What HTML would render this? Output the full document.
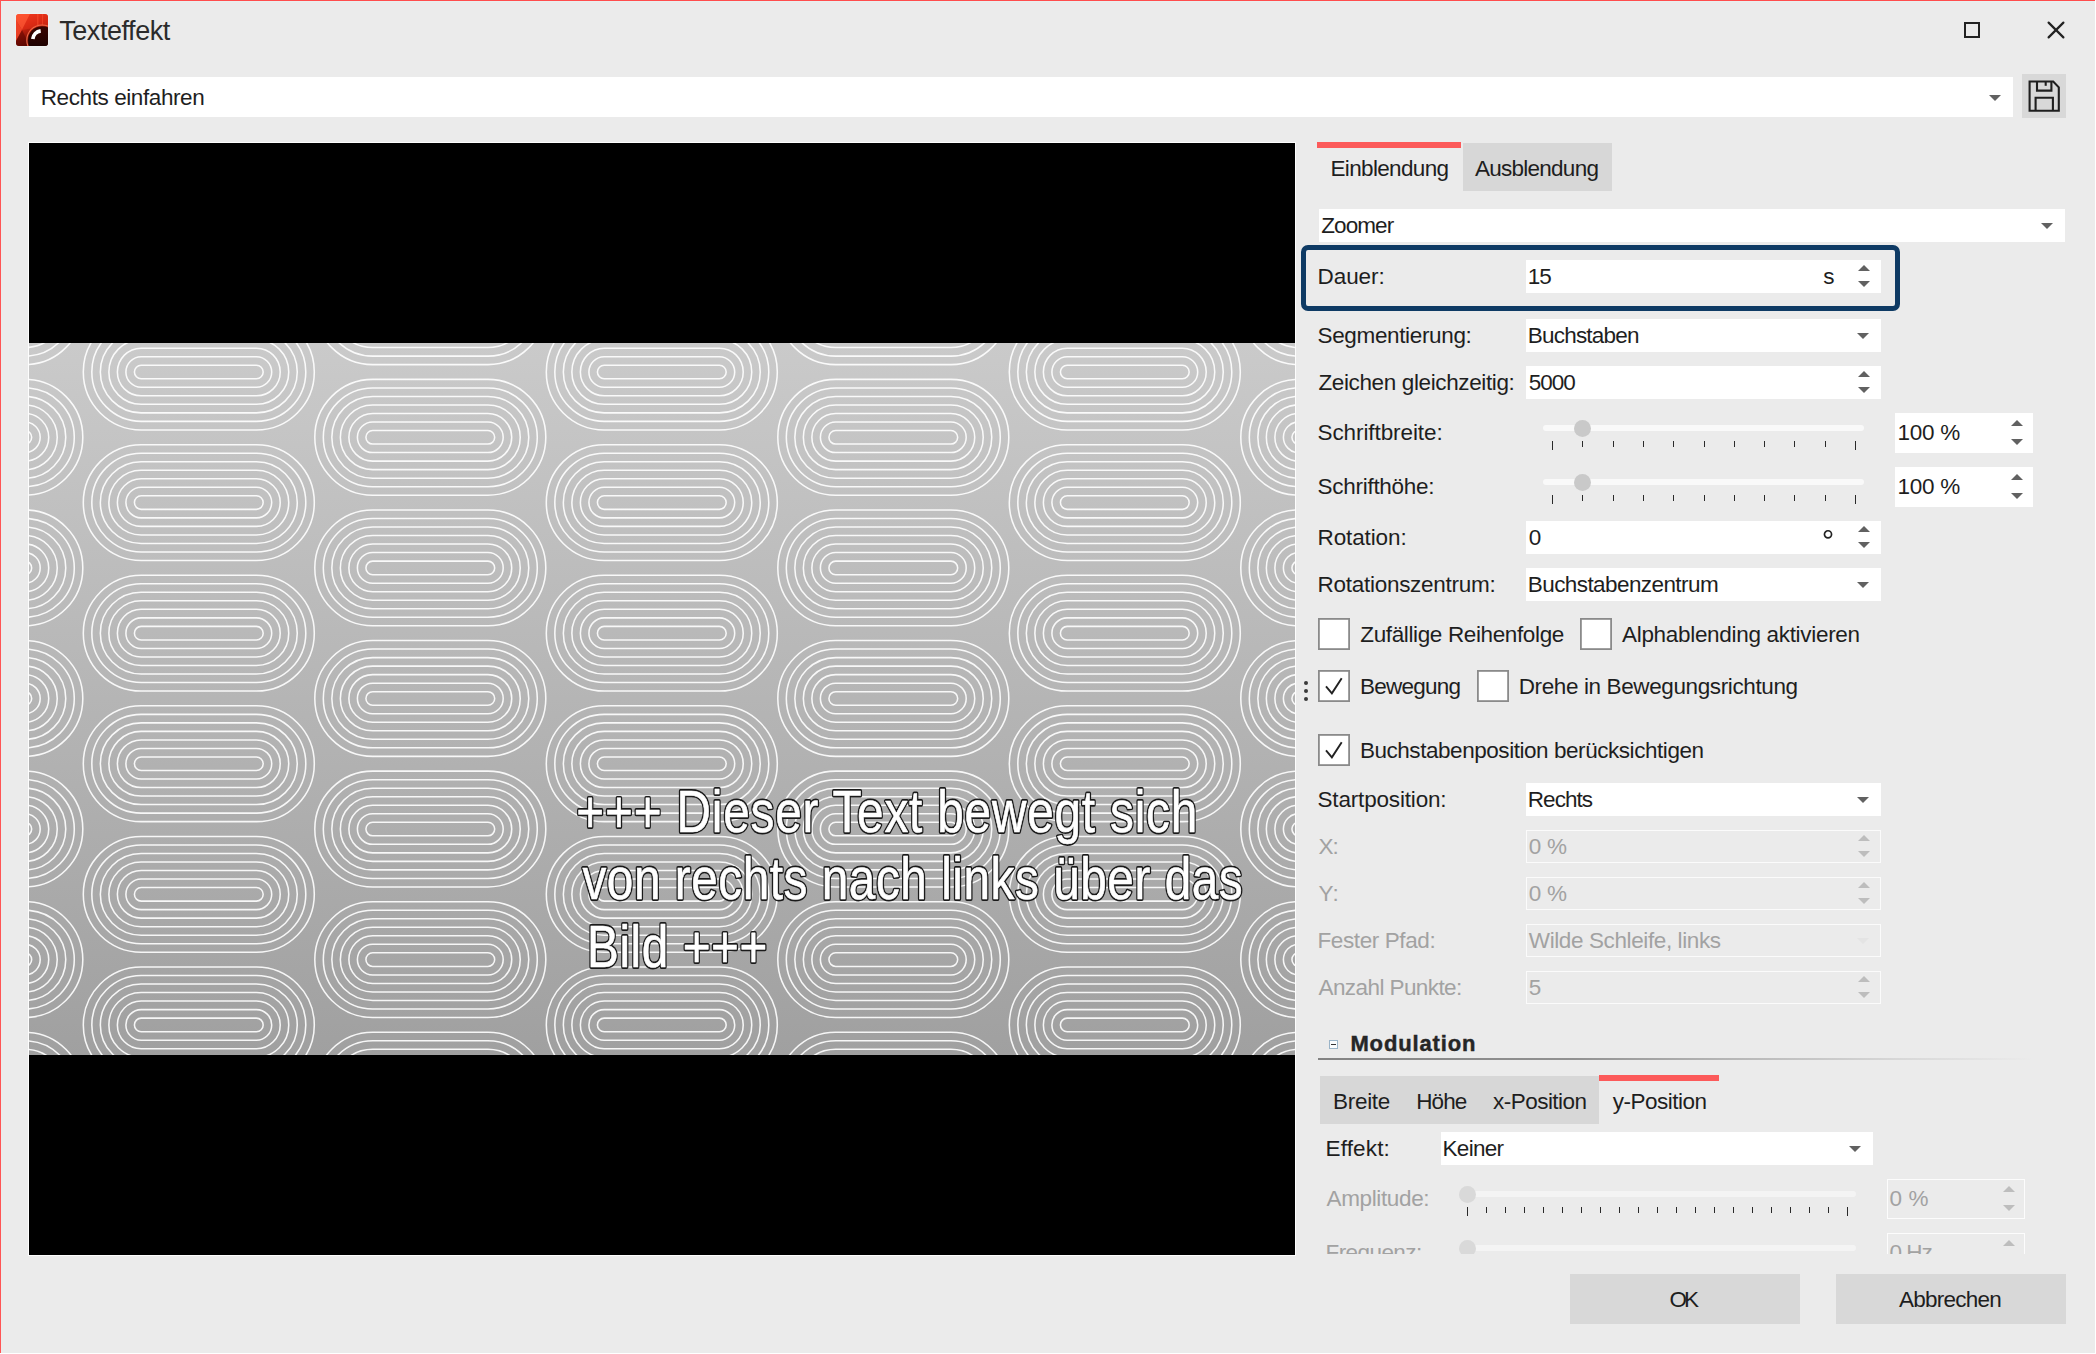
<!DOCTYPE html>
<html lang="de"><head><meta charset="utf-8"><title>Texteffekt</title>
<style>
html,body{margin:0;padding:0}
body{width:2096px;height:1354px;overflow:hidden;background:#ebebeb;position:relative;font-family:"Liberation Sans",sans-serif}
.a,#m>div{position:absolute}
.t{position:absolute;white-space:pre;line-height:26px;font-family:"Liberation Sans",sans-serif}
#cl{position:absolute;left:0;top:1170px;width:2096px;height:84px;overflow:hidden}
#cl>.in{position:absolute;left:0;top:-1170px;width:2096px;height:1354px}
</style></head><body>
<div class="a" style="left:0;top:0;width:2096px;height:1px;background:#ff4d4d"></div>
<div class="a" style="left:1px;top:1px;width:2094px;height:1px;background:#e8f0f0"></div>
<div class="a" style="left:0;top:0;width:1px;height:1353px;background:#ff5555"></div>
<div class="a" style="left:2095px;top:0;width:1px;height:1354px;background:#fff"></div>
<div class="a" style="left:0;top:1353px;width:2096px;height:1px;background:#fff"></div>
<svg class="a" style="left:15px;top:13px" width="34" height="34" viewBox="-1 -1 34 34">
<defs><linearGradient id="ig" x1="0" y1="0" x2="0.35" y2="1"><stop offset="0" stop-color="#ff4326"/><stop offset=".45" stop-color="#cc2410"/><stop offset="1" stop-color="#5a0600"/></linearGradient>
<linearGradient id="ig2" x1="0" y1="0" x2="0" y2="1"><stop offset="0" stop-color="#3a0500"/><stop offset="1" stop-color="#120000"/></linearGradient>
<clipPath id="ic"><rect x="0" y="0" width="32" height="32" rx="3"/></clipPath></defs>
<rect x="-.5" y="-.5" width="33" height="33" rx="3.3" fill="#eff5f5"/>
<g clip-path="url(#ic)"><rect width="32" height="32" fill="url(#ig)"/>
<path d="M0 0H14L6 16L0 6Z" fill="#ff5a36" fill-opacity=".75"/>
<path d="M0 6L6 16L0 27Z" fill="#f04428" fill-opacity=".9"/>
<path d="M6 16L0 27V32H14Z" fill="#5a0600" fill-opacity=".55"/>
<path d="M14 0H32V12L18 14L6 16Z" fill="#e83018" fill-opacity=".5"/>
<path d="M21 0H22.5V11H21ZM26 0H27V11H26Z" fill="#ff5533" fill-opacity=".45"/>
<circle cx="26" cy="26.2" r="15.2" fill="none" stroke="#ee6a48" stroke-width="1.1"/>
<circle cx="26" cy="26.2" r="13.9" fill="url(#ig2)"/>
<path d="M16.8 25A9.3 9.3 0 0 1 24.7 16.8" fill="none" stroke="#fff" stroke-width="3.7"/>
</g></svg>
<svg class="a" style="left:1963px;top:21px" width="18" height="18" viewBox="0 0 18 18"><rect x="2" y="2" width="14" height="14" fill="none" stroke="#222" stroke-width="2"/></svg>
<svg class="a" style="left:2046px;top:20px" width="20" height="20" viewBox="0 0 20 20"><path d="M2.6 2.6L17.4 17.4M17.4 2.6L2.6 17.4" fill="none" stroke="#222" stroke-width="2.2" stroke-linecap="round"/></svg>
<div class="a" style="left:28px;top:142px;width:1268px;height:1114px;background:#fdfdfd"></div>
<div class="a" style="left:29px;top:143px;width:1266px;height:1112px;background:#000"></div>
<svg class="a" style="left:29px;top:343px" width="1266" height="712" viewBox="29 343 1266 712"><defs><linearGradient id="gg" x1="0" y1="0" x2="0" y2="1"><stop offset="0" stop-color="#cacaca"/><stop offset="1" stop-color="#a0a0a0"/></linearGradient><g id="pl" fill="none" stroke="#fff" stroke-opacity=".9" stroke-width="1.55"><rect x="-115.50" y="-57.90" width="231.00" height="115.80" rx="57.90"/><rect x="-106.98" y="-49.38" width="213.96" height="98.76" rx="49.38"/><rect x="-98.46" y="-40.86" width="196.92" height="81.72" rx="40.86"/><rect x="-89.94" y="-32.34" width="179.88" height="64.68" rx="32.34"/><rect x="-81.42" y="-23.82" width="162.84" height="47.64" rx="23.82"/><rect x="-72.90" y="-15.30" width="145.80" height="30.60" rx="15.30"/><rect x="-64.38" y="-6.78" width="128.76" height="13.56" rx="6.78"/></g></defs><rect x="29" y="343" width="1266" height="712" fill="url(#gg)"/><use href="#pl" x="-32.70" y="306.72"/><use href="#pl" x="-32.70" y="437.30"/><use href="#pl" x="-32.70" y="567.88"/><use href="#pl" x="-32.70" y="698.46"/><use href="#pl" x="-32.70" y="829.04"/><use href="#pl" x="-32.70" y="959.62"/><use href="#pl" x="-32.70" y="1090.20"/><use href="#pl" x="198.80" y="372.00"/><use href="#pl" x="198.80" y="502.58"/><use href="#pl" x="198.80" y="633.16"/><use href="#pl" x="198.80" y="763.74"/><use href="#pl" x="198.80" y="894.32"/><use href="#pl" x="198.80" y="1024.90"/><use href="#pl" x="430.30" y="306.72"/><use href="#pl" x="430.30" y="437.30"/><use href="#pl" x="430.30" y="567.88"/><use href="#pl" x="430.30" y="698.46"/><use href="#pl" x="430.30" y="829.04"/><use href="#pl" x="430.30" y="959.62"/><use href="#pl" x="430.30" y="1090.20"/><use href="#pl" x="661.80" y="372.00"/><use href="#pl" x="661.80" y="502.58"/><use href="#pl" x="661.80" y="633.16"/><use href="#pl" x="661.80" y="763.74"/><use href="#pl" x="661.80" y="894.32"/><use href="#pl" x="661.80" y="1024.90"/><use href="#pl" x="893.30" y="306.72"/><use href="#pl" x="893.30" y="437.30"/><use href="#pl" x="893.30" y="567.88"/><use href="#pl" x="893.30" y="698.46"/><use href="#pl" x="893.30" y="829.04"/><use href="#pl" x="893.30" y="959.62"/><use href="#pl" x="893.30" y="1090.20"/><use href="#pl" x="1124.80" y="372.00"/><use href="#pl" x="1124.80" y="502.58"/><use href="#pl" x="1124.80" y="633.16"/><use href="#pl" x="1124.80" y="763.74"/><use href="#pl" x="1124.80" y="894.32"/><use href="#pl" x="1124.80" y="1024.90"/><use href="#pl" x="1356.30" y="306.72"/><use href="#pl" x="1356.30" y="437.30"/><use href="#pl" x="1356.30" y="567.88"/><use href="#pl" x="1356.30" y="698.46"/><use href="#pl" x="1356.30" y="829.04"/><use href="#pl" x="1356.30" y="959.62"/><use href="#pl" x="1356.30" y="1090.20"/></svg>
<svg class="a" style="left:29px;top:343px" width="1266" height="712" viewBox="29 343 1266 712" font-family="Liberation Sans, sans-serif" font-size="58.5"><g transform="translate(576.37 831.5) scale(0.8150 1)" letter-spacing="1.017"><text fill="#fff" stroke="#1a1a1a" stroke-width="3.8" stroke-linejoin="round">+++ Dieser Text bewegt sich</text><text fill="#fff" stroke="#fff" stroke-width="0.6" stroke-linejoin="round">+++ Dieser Text bewegt sich</text></g><g transform="translate(582.40 899.1) scale(0.8150 1)" letter-spacing="0.691"><text fill="#fff" stroke="#1a1a1a" stroke-width="3.8" stroke-linejoin="round">von rechts nach links über das</text><text fill="#fff" stroke="#fff" stroke-width="0.6" stroke-linejoin="round">von rechts nach links über das</text></g><g transform="translate(587.04 967.4) scale(0.8150 1)" letter-spacing="0.709"><text fill="#fff" stroke="#1a1a1a" stroke-width="3.8" stroke-linejoin="round">Bild +++</text><text fill="#fff" stroke="#fff" stroke-width="0.6" stroke-linejoin="round">Bild +++</text></g></svg>
<div id="m">
<div class="" style="left:29px;top:77px;width:1984px;height:40px;background:#fff;"></div>
<svg class="a" style="left:1989px;top:95px" width="12" height="6" viewBox="0 0 12 6"><path d="M0 0H12L6.0 6Z" fill="#616161"/></svg>
<div class="a" style="left:2022px;top:74px;width:44px;height:44px;background:#d8d8d8"><svg width="44" height="44" viewBox="0 0 44 44" fill="none" stroke="#1f1f1f" stroke-width="2.1" stroke-linejoin="miter"><path d="M7.6 7.5H31.2L36.8 13.3V36.8H7.6Z"/><path d="M15 7.5V16.6H29.4V7.5"/><path d="M23.7 7.5V11.8"/><path d="M13.6 36.8V23.7H30.9V36.8"/></svg></div>
<div class="" style="left:1317px;top:142px;width:144px;height:6px;background:#fc5a5a;"></div>
<div class="" style="left:1463px;top:143px;width:149px;height:48px;background:#d7d7d7;"></div>
<div class="" style="left:1319px;top:209px;width:746px;height:33px;background:#fff;"></div>
<svg class="a" style="left:2041px;top:223px" width="12" height="6" viewBox="0 0 12 6"><path d="M0 0H12L6.0 6Z" fill="#616161"/></svg>
<div class="a" style="left:1301px;top:245px;width:599px;height:66px;box-sizing:border-box;border:5px solid #0e3a64;border-radius:7px"></div>
<div class="" style="left:1526px;top:260px;width:355px;height:33px;background:#fff;"></div>
<svg class="a" style="left:1858.2px;top:265px" width="12" height="6" viewBox="0 0 12 6"><path d="M0 6H12L6.0 0Z" fill="#616161"/></svg>
<svg class="a" style="left:1858.2px;top:281px" width="12" height="6" viewBox="0 0 12 6"><path d="M0 0H12L6.0 6Z" fill="#616161"/></svg>
<div class="" style="left:1526px;top:319px;width:355px;height:33px;background:#fff;"></div>
<svg class="a" style="left:1857px;top:333px" width="12" height="6" viewBox="0 0 12 6"><path d="M0 0H12L6.0 6Z" fill="#616161"/></svg>
<div class="" style="left:1526px;top:366px;width:355px;height:33px;background:#fff;"></div>
<svg class="a" style="left:1858.2px;top:371px" width="12" height="6" viewBox="0 0 12 6"><path d="M0 6H12L6.0 0Z" fill="#616161"/></svg>
<svg class="a" style="left:1858.2px;top:387px" width="12" height="6" viewBox="0 0 12 6"><path d="M0 0H12L6.0 6Z" fill="#616161"/></svg>
<div class="" style="left:1543px;top:425px;width:321px;height:6px;background:#f9f9f9;border-radius:3px"></div>
<div class="" style="left:1573.5px;top:419.5px;width:17px;height:17px;background:#c9c9c9;border-radius:50%"></div>
<div class="" style="left:1552px;top:441px;width:1px;height:9px;background:#2a2a2a;"></div>
<div class="" style="left:1582px;top:441px;width:1px;height:6px;background:#2a2a2a;"></div>
<div class="" style="left:1613px;top:441px;width:1px;height:6px;background:#2a2a2a;"></div>
<div class="" style="left:1643px;top:441px;width:1px;height:6px;background:#2a2a2a;"></div>
<div class="" style="left:1673px;top:441px;width:1px;height:6px;background:#2a2a2a;"></div>
<div class="" style="left:1704px;top:441px;width:1px;height:6px;background:#2a2a2a;"></div>
<div class="" style="left:1734px;top:441px;width:1px;height:6px;background:#2a2a2a;"></div>
<div class="" style="left:1764px;top:441px;width:1px;height:6px;background:#2a2a2a;"></div>
<div class="" style="left:1794px;top:441px;width:1px;height:6px;background:#2a2a2a;"></div>
<div class="" style="left:1825px;top:441px;width:1px;height:6px;background:#2a2a2a;"></div>
<div class="" style="left:1855px;top:441px;width:1px;height:9px;background:#2a2a2a;"></div>
<div class="" style="left:1895px;top:413px;width:138px;height:40px;background:#fff;"></div>
<svg class="a" style="left:2010.5px;top:420px" width="12" height="6" viewBox="0 0 12 6"><path d="M0 6H12L6.0 0Z" fill="#616161"/></svg>
<svg class="a" style="left:2010.5px;top:439px" width="12" height="6" viewBox="0 0 12 6"><path d="M0 0H12L6.0 6Z" fill="#616161"/></svg>
<div class="" style="left:1543px;top:479px;width:321px;height:6px;background:#f9f9f9;border-radius:3px"></div>
<div class="" style="left:1573.5px;top:473.5px;width:17px;height:17px;background:#c9c9c9;border-radius:50%"></div>
<div class="" style="left:1552px;top:495px;width:1px;height:9px;background:#2a2a2a;"></div>
<div class="" style="left:1582px;top:495px;width:1px;height:6px;background:#2a2a2a;"></div>
<div class="" style="left:1613px;top:495px;width:1px;height:6px;background:#2a2a2a;"></div>
<div class="" style="left:1643px;top:495px;width:1px;height:6px;background:#2a2a2a;"></div>
<div class="" style="left:1673px;top:495px;width:1px;height:6px;background:#2a2a2a;"></div>
<div class="" style="left:1704px;top:495px;width:1px;height:6px;background:#2a2a2a;"></div>
<div class="" style="left:1734px;top:495px;width:1px;height:6px;background:#2a2a2a;"></div>
<div class="" style="left:1764px;top:495px;width:1px;height:6px;background:#2a2a2a;"></div>
<div class="" style="left:1794px;top:495px;width:1px;height:6px;background:#2a2a2a;"></div>
<div class="" style="left:1825px;top:495px;width:1px;height:6px;background:#2a2a2a;"></div>
<div class="" style="left:1855px;top:495px;width:1px;height:9px;background:#2a2a2a;"></div>
<div class="" style="left:1895px;top:467px;width:138px;height:40px;background:#fff;"></div>
<svg class="a" style="left:2010.5px;top:474px" width="12" height="6" viewBox="0 0 12 6"><path d="M0 6H12L6.0 0Z" fill="#616161"/></svg>
<svg class="a" style="left:2010.5px;top:493px" width="12" height="6" viewBox="0 0 12 6"><path d="M0 0H12L6.0 6Z" fill="#616161"/></svg>
<div class="" style="left:1526px;top:521px;width:355px;height:33px;background:#fff;"></div>
<svg class="a" style="left:1858.2px;top:526px" width="12" height="6" viewBox="0 0 12 6"><path d="M0 6H12L6.0 0Z" fill="#616161"/></svg>
<svg class="a" style="left:1858.2px;top:542px" width="12" height="6" viewBox="0 0 12 6"><path d="M0 0H12L6.0 6Z" fill="#616161"/></svg>
<svg class="a" style="left:1822px;top:528px" width="12" height="12" viewBox="0 0 12 12"><circle cx="6" cy="6.3" r="3.55" fill="none" stroke="#222" stroke-width="1.7"/></svg>
<div class="" style="left:1526px;top:568px;width:355px;height:33px;background:#fff;"></div>
<svg class="a" style="left:1857px;top:582px" width="12" height="6" viewBox="0 0 12 6"><path d="M0 0H12L6.0 6Z" fill="#616161"/></svg>
<svg class="a" style="left:1318px;top:618px" width="32" height="32" viewBox="0 0 32 32"><rect x=".9" y=".9" width="30.2" height="30.2" fill="#fff" stroke="#8a8a8a" stroke-width="1.8"/></svg>
<svg class="a" style="left:1580px;top:618px" width="32" height="32" viewBox="0 0 32 32"><rect x=".9" y=".9" width="30.2" height="30.2" fill="#fff" stroke="#8a8a8a" stroke-width="1.8"/></svg>
<svg class="a" style="left:1318px;top:670px" width="32" height="32" viewBox="0 0 32 32"><rect x=".9" y=".9" width="30.2" height="30.2" fill="#fff" stroke="#8a8a8a" stroke-width="1.8"/><path d="M8 16.3L13.9 23.3L23.7 8.2" fill="none" stroke="#222" stroke-width="1.9"/></svg>
<svg class="a" style="left:1477px;top:670px" width="32" height="32" viewBox="0 0 32 32"><rect x=".9" y=".9" width="30.2" height="30.2" fill="#fff" stroke="#8a8a8a" stroke-width="1.8"/></svg>
<div class="" style="left:1304px;top:681px;width:4px;height:4px;background:#3a3a3a;border-radius:50%"></div>
<div class="" style="left:1304px;top:689px;width:4px;height:4px;background:#3a3a3a;border-radius:50%"></div>
<div class="" style="left:1304px;top:697px;width:4px;height:4px;background:#3a3a3a;border-radius:50%"></div>
<svg class="a" style="left:1318px;top:734px" width="32" height="32" viewBox="0 0 32 32"><rect x=".9" y=".9" width="30.2" height="30.2" fill="#fff" stroke="#8a8a8a" stroke-width="1.8"/><path d="M8 16.3L13.9 23.3L23.7 8.2" fill="none" stroke="#222" stroke-width="1.9"/></svg>
<div class="" style="left:1526px;top:783px;width:355px;height:33px;background:#fff;"></div>
<svg class="a" style="left:1857px;top:797px" width="12" height="6" viewBox="0 0 12 6"><path d="M0 0H12L6.0 6Z" fill="#616161"/></svg>
<div class="" style="left:1526px;top:830px;width:355px;height:33px;background:#ebebeb;box-sizing:border-box;border:1px solid #fbfbfb"></div>
<svg class="a" style="left:1858.2px;top:835px" width="12" height="6" viewBox="0 0 12 6"><path d="M0 6H12L6.0 0Z" fill="#bdbdbd"/></svg>
<svg class="a" style="left:1858.2px;top:851px" width="12" height="6" viewBox="0 0 12 6"><path d="M0 0H12L6.0 6Z" fill="#bdbdbd"/></svg>
<div class="" style="left:1526px;top:877px;width:355px;height:33px;background:#ebebeb;box-sizing:border-box;border:1px solid #fbfbfb"></div>
<svg class="a" style="left:1858.2px;top:882px" width="12" height="6" viewBox="0 0 12 6"><path d="M0 6H12L6.0 0Z" fill="#bdbdbd"/></svg>
<svg class="a" style="left:1858.2px;top:898px" width="12" height="6" viewBox="0 0 12 6"><path d="M0 0H12L6.0 6Z" fill="#bdbdbd"/></svg>
<div class="" style="left:1526px;top:924px;width:355px;height:33px;background:#ebebeb;box-sizing:border-box;border:1px solid #fbfbfb"></div>
<svg class="a" style="left:1857px;top:938px" width="12" height="6" viewBox="0 0 12 6"><path d="M0 0H12L6.0 6Z" fill="#e4e4e4"/></svg>
<div class="" style="left:1526px;top:971px;width:355px;height:33px;background:#ebebeb;box-sizing:border-box;border:1px solid #fbfbfb"></div>
<svg class="a" style="left:1858.2px;top:976px" width="12" height="6" viewBox="0 0 12 6"><path d="M0 6H12L6.0 0Z" fill="#bdbdbd"/></svg>
<svg class="a" style="left:1858.2px;top:992px" width="12" height="6" viewBox="0 0 12 6"><path d="M0 0H12L6.0 6Z" fill="#bdbdbd"/></svg>
<div class="a" style="left:1329px;top:1040px;width:9px;height:9px;box-sizing:border-box;border:1px solid #9ab4c8;background:#fafcfd"><div class="a" style="left:1px;top:3px;width:5px;height:1px;background:#333"></div></div>
<div class="" style="left:1318px;top:1058px;width:730px;height:2px;background:linear-gradient(90deg,rgba(105,105,105,.8) 0,rgba(110,110,110,.72) 35%,rgba(120,120,120,.48) 55%,rgba(140,140,140,.2) 80%,rgba(200,200,200,0) 98%);"></div>
<div class="" style="left:1320px;top:1076px;width:279px;height:48px;background:#d7d7d7;"></div>
<div class="" style="left:1599px;top:1075px;width:120px;height:6px;background:#fc5a5a;"></div>
<div class="" style="left:1441px;top:1132px;width:432px;height:33px;background:#fff;"></div>
<svg class="a" style="left:1849px;top:1146px" width="12" height="6" viewBox="0 0 12 6"><path d="M0 0H12L6.0 6Z" fill="#616161"/></svg>
<div class="" style="left:1570px;top:1274px;width:230px;height:50px;background:#d8d8d8;"></div>
<div class="" style="left:1836px;top:1274px;width:230px;height:50px;background:#d8d8d8;"></div>
</div>
<span class="t" style="left:59.2px;top:18px;font-size:27px;color:#2b2b2b;letter-spacing:-0.44px;">Texteffekt</span>
<span class="t" style="left:40.75px;top:85px;font-size:22.5px;color:#1e1e1e;letter-spacing:-0.41px;">Rechts einfahren</span>
<span class="t" style="left:1330.5px;top:156px;font-size:22.5px;color:#1e1e1e;letter-spacing:-0.66px;">Einblendung</span>
<span class="t" style="left:1474.9px;top:156px;font-size:22.5px;color:#1e1e1e;letter-spacing:-0.73px;">Ausblendung</span>
<span class="t" style="left:1321.3px;top:213px;font-size:22.5px;color:#1e1e1e;letter-spacing:-0.93px;">Zoomer</span>
<span class="t" style="left:1317.5px;top:264px;font-size:22.5px;color:#1e1e1e;letter-spacing:-0.06px;">Dauer:</span>
<span class="t" style="left:1527.8px;top:264px;font-size:22.5px;color:#1e1e1e;letter-spacing:-1.11px;">15</span>
<span class="t" style="left:1823.3px;top:264px;font-size:22.5px;color:#1e1e1e;letter-spacing:0px;">s</span>
<span class="t" style="left:1317.5px;top:323px;font-size:22.5px;color:#1e1e1e;letter-spacing:-0.35px;">Segmentierung:</span>
<span class="t" style="left:1527.8px;top:323px;font-size:22.5px;color:#1e1e1e;letter-spacing:-0.8px;">Buchstaben</span>
<span class="t" style="left:1318.5px;top:370px;font-size:22.5px;color:#1e1e1e;letter-spacing:-0.38px;">Zeichen gleichzeitig:</span>
<span class="t" style="left:1528.8px;top:370px;font-size:22.5px;color:#1e1e1e;letter-spacing:-1.05px;">5000</span>
<span class="t" style="left:1317.5px;top:420px;font-size:22.5px;color:#1e1e1e;letter-spacing:-0.09px;">Schriftbreite:</span>
<span class="t" style="left:1897.5px;top:420px;font-size:22.5px;color:#1e1e1e;letter-spacing:-0.25px;">100 %</span>
<span class="t" style="left:1317.5px;top:474px;font-size:22.5px;color:#1e1e1e;letter-spacing:-0.27px;">Schrifthöhe:</span>
<span class="t" style="left:1897.5px;top:474px;font-size:22.5px;color:#1e1e1e;letter-spacing:-0.25px;">100 %</span>
<span class="t" style="left:1317.5px;top:525px;font-size:22.5px;color:#1e1e1e;letter-spacing:-0.11px;">Rotation:</span>
<span class="t" style="left:1528.8px;top:525px;font-size:22.5px;color:#1e1e1e;letter-spacing:0px;">0</span>
<span class="t" style="left:1317.5px;top:572px;font-size:22.5px;color:#1e1e1e;letter-spacing:-0.27px;">Rotationszentrum:</span>
<span class="t" style="left:1527.8px;top:572px;font-size:22.5px;color:#1e1e1e;letter-spacing:-0.58px;">Buchstabenzentrum</span>
<span class="t" style="left:1360.3px;top:622px;font-size:22.5px;color:#1e1e1e;letter-spacing:-0.37px;">Zufällige Reihenfolge</span>
<span class="t" style="left:1622px;top:622px;font-size:22.5px;color:#1e1e1e;letter-spacing:-0.31px;">Alphablending aktivieren</span>
<span class="t" style="left:1359.9px;top:674px;font-size:22.5px;color:#1e1e1e;letter-spacing:-0.75px;">Bewegung</span>
<span class="t" style="left:1518.7px;top:674px;font-size:22.5px;color:#1e1e1e;letter-spacing:-0.38px;">Drehe in Bewegungsrichtung</span>
<span class="t" style="left:1359.9px;top:738px;font-size:22.5px;color:#1e1e1e;letter-spacing:-0.45px;">Buchstabenposition berücksichtigen</span>
<span class="t" style="left:1317.5px;top:787px;font-size:22.5px;color:#1e1e1e;letter-spacing:-0.17px;">Startposition:</span>
<span class="t" style="left:1527.8px;top:787px;font-size:22.5px;color:#1e1e1e;letter-spacing:-0.96px;">Rechts</span>
<span class="t" style="left:1318.5px;top:834px;font-size:22.5px;color:#a2a2a2;letter-spacing:-1.11px;">X:</span>
<span class="t" style="left:1528.8px;top:834px;font-size:22.5px;color:#a2a2a2;letter-spacing:-0.28px;">0 %</span>
<span class="t" style="left:1318.5px;top:881px;font-size:22.5px;color:#a2a2a2;letter-spacing:0.13px;">Y:</span>
<span class="t" style="left:1528.8px;top:881px;font-size:22.5px;color:#a2a2a2;letter-spacing:-0.28px;">0 %</span>
<span class="t" style="left:1317.5px;top:928px;font-size:22.5px;color:#a2a2a2;letter-spacing:-0.4px;">Fester Pfad:</span>
<span class="t" style="left:1528.8px;top:928px;font-size:22.5px;color:#a2a2a2;letter-spacing:-0.39px;">Wilde Schleife, links</span>
<span class="t" style="left:1318.5px;top:975px;font-size:22.5px;color:#a2a2a2;letter-spacing:-0.58px;">Anzahl Punkte:</span>
<span class="t" style="left:1528.8px;top:975px;font-size:22.5px;color:#a2a2a2;letter-spacing:0px;">5</span>
<span class="t" style="left:1350.4px;top:1031px;font-size:22px;color:#262626;letter-spacing:0.86px;font-weight:bold;-webkit-text-stroke:.45px #262626;">Modulation</span>
<span class="t" style="left:1333px;top:1089px;font-size:22.5px;color:#1e1e1e;letter-spacing:-0.29px;">Breite</span>
<span class="t" style="left:1416.2px;top:1089px;font-size:22.5px;color:#1e1e1e;letter-spacing:-0.89px;">Höhe</span>
<span class="t" style="left:1493.1px;top:1089px;font-size:22.5px;color:#1e1e1e;letter-spacing:-0.54px;">x-Position</span>
<span class="t" style="left:1612.8px;top:1089px;font-size:22.5px;color:#1e1e1e;letter-spacing:-0.51px;">y-Position</span>
<span class="t" style="left:1325.5px;top:1136px;font-size:22.5px;color:#1e1e1e;letter-spacing:0.16px;">Effekt:</span>
<span class="t" style="left:1442.5px;top:1136px;font-size:22.5px;color:#1e1e1e;letter-spacing:-0.69px;">Keiner</span>
<span class="t" style="left:1669.4px;top:1287px;font-size:22.5px;color:#1e1e1e;letter-spacing:-2.8px;">OK</span>
<span class="t" style="left:1898.9px;top:1287px;font-size:22.5px;color:#1e1e1e;letter-spacing:-0.74px;">Abbrechen</span>
<div id="cl"><div class="in">
<div class="a" style="left:1467px;top:1191px;width:389px;height:6px;background:#f4f4f4;border-radius:3px"></div>
<div class="a" style="left:1459px;top:1185.5px;width:17px;height:17px;background:#d9d9d9;border-radius:50%"></div>
<div class="a" style="left:1467px;top:1207px;width:1px;height:9px;background:#2a2a2a;"></div>
<div class="a" style="left:1486px;top:1207px;width:1px;height:6px;background:#2a2a2a;"></div>
<div class="a" style="left:1505px;top:1207px;width:1px;height:6px;background:#2a2a2a;"></div>
<div class="a" style="left:1524px;top:1207px;width:1px;height:6px;background:#2a2a2a;"></div>
<div class="a" style="left:1543px;top:1207px;width:1px;height:6px;background:#2a2a2a;"></div>
<div class="a" style="left:1562px;top:1207px;width:1px;height:6px;background:#2a2a2a;"></div>
<div class="a" style="left:1581px;top:1207px;width:1px;height:6px;background:#2a2a2a;"></div>
<div class="a" style="left:1600px;top:1207px;width:1px;height:6px;background:#2a2a2a;"></div>
<div class="a" style="left:1619px;top:1207px;width:1px;height:6px;background:#2a2a2a;"></div>
<div class="a" style="left:1638px;top:1207px;width:1px;height:6px;background:#2a2a2a;"></div>
<div class="a" style="left:1657px;top:1207px;width:1px;height:6px;background:#2a2a2a;"></div>
<div class="a" style="left:1676px;top:1207px;width:1px;height:6px;background:#2a2a2a;"></div>
<div class="a" style="left:1695px;top:1207px;width:1px;height:6px;background:#2a2a2a;"></div>
<div class="a" style="left:1714px;top:1207px;width:1px;height:6px;background:#2a2a2a;"></div>
<div class="a" style="left:1733px;top:1207px;width:1px;height:6px;background:#2a2a2a;"></div>
<div class="a" style="left:1752px;top:1207px;width:1px;height:6px;background:#2a2a2a;"></div>
<div class="a" style="left:1771px;top:1207px;width:1px;height:6px;background:#2a2a2a;"></div>
<div class="a" style="left:1790px;top:1207px;width:1px;height:6px;background:#2a2a2a;"></div>
<div class="a" style="left:1809px;top:1207px;width:1px;height:6px;background:#2a2a2a;"></div>
<div class="a" style="left:1828px;top:1207px;width:1px;height:6px;background:#2a2a2a;"></div>
<div class="a" style="left:1847px;top:1207px;width:1px;height:9px;background:#2a2a2a;"></div>
<div class="a" style="left:1887px;top:1179px;width:138px;height:40px;background:#ebebeb;box-sizing:border-box;border:1px solid #fcfcfc"></div>
<svg class="a" style="left:2002.5px;top:1186px" width="12" height="6" viewBox="0 0 12 6"><path d="M0 6H12L6 0Z" fill="#bdbdbd"/></svg>
<svg class="a" style="left:2002.5px;top:1205px" width="12" height="6" viewBox="0 0 12 6"><path d="M0 0H12L6 6Z" fill="#bdbdbd"/></svg>
<div class="a" style="left:1467px;top:1245px;width:389px;height:6px;background:#f4f4f4;border-radius:3px"></div>
<div class="a" style="left:1459px;top:1239.5px;width:17px;height:17px;background:#d9d9d9;border-radius:50%"></div>
<div class="a" style="left:1467px;top:1261px;width:1px;height:9px;background:#2a2a2a;"></div>
<div class="a" style="left:1486px;top:1261px;width:1px;height:6px;background:#2a2a2a;"></div>
<div class="a" style="left:1505px;top:1261px;width:1px;height:6px;background:#2a2a2a;"></div>
<div class="a" style="left:1524px;top:1261px;width:1px;height:6px;background:#2a2a2a;"></div>
<div class="a" style="left:1543px;top:1261px;width:1px;height:6px;background:#2a2a2a;"></div>
<div class="a" style="left:1562px;top:1261px;width:1px;height:6px;background:#2a2a2a;"></div>
<div class="a" style="left:1581px;top:1261px;width:1px;height:6px;background:#2a2a2a;"></div>
<div class="a" style="left:1600px;top:1261px;width:1px;height:6px;background:#2a2a2a;"></div>
<div class="a" style="left:1619px;top:1261px;width:1px;height:6px;background:#2a2a2a;"></div>
<div class="a" style="left:1638px;top:1261px;width:1px;height:6px;background:#2a2a2a;"></div>
<div class="a" style="left:1657px;top:1261px;width:1px;height:6px;background:#2a2a2a;"></div>
<div class="a" style="left:1676px;top:1261px;width:1px;height:6px;background:#2a2a2a;"></div>
<div class="a" style="left:1695px;top:1261px;width:1px;height:6px;background:#2a2a2a;"></div>
<div class="a" style="left:1714px;top:1261px;width:1px;height:6px;background:#2a2a2a;"></div>
<div class="a" style="left:1733px;top:1261px;width:1px;height:6px;background:#2a2a2a;"></div>
<div class="a" style="left:1752px;top:1261px;width:1px;height:6px;background:#2a2a2a;"></div>
<div class="a" style="left:1771px;top:1261px;width:1px;height:6px;background:#2a2a2a;"></div>
<div class="a" style="left:1790px;top:1261px;width:1px;height:6px;background:#2a2a2a;"></div>
<div class="a" style="left:1809px;top:1261px;width:1px;height:6px;background:#2a2a2a;"></div>
<div class="a" style="left:1828px;top:1261px;width:1px;height:6px;background:#2a2a2a;"></div>
<div class="a" style="left:1847px;top:1261px;width:1px;height:9px;background:#2a2a2a;"></div>
<div class="a" style="left:1887px;top:1233px;width:138px;height:40px;background:#ebebeb;box-sizing:border-box;border:1px solid #fcfcfc"></div>
<svg class="a" style="left:2002.5px;top:1240px" width="12" height="6" viewBox="0 0 12 6"><path d="M0 6H12L6 0Z" fill="#bdbdbd"/></svg>
<svg class="a" style="left:2002.5px;top:1259px" width="12" height="6" viewBox="0 0 12 6"><path d="M0 0H12L6 6Z" fill="#bdbdbd"/></svg>
<span class="t" style="left:1326.5px;top:1186px;font-size:22.5px;color:#a2a2a2;letter-spacing:-0.36px;">Amplitude:</span>
<span class="t" style="left:1889.5px;top:1186px;font-size:22.5px;color:#a2a2a2;letter-spacing:0.07px;">0 %</span>
<span class="t" style="left:1325.5px;top:1240px;font-size:22.5px;color:#a2a2a2;letter-spacing:-0.57px;">Frequenz:</span>
<span class="t" style="left:1889.5px;top:1240px;font-size:22.5px;color:#a2a2a2;letter-spacing:-0.97px;">0 Hz</span>
</div></div>
</body></html>
